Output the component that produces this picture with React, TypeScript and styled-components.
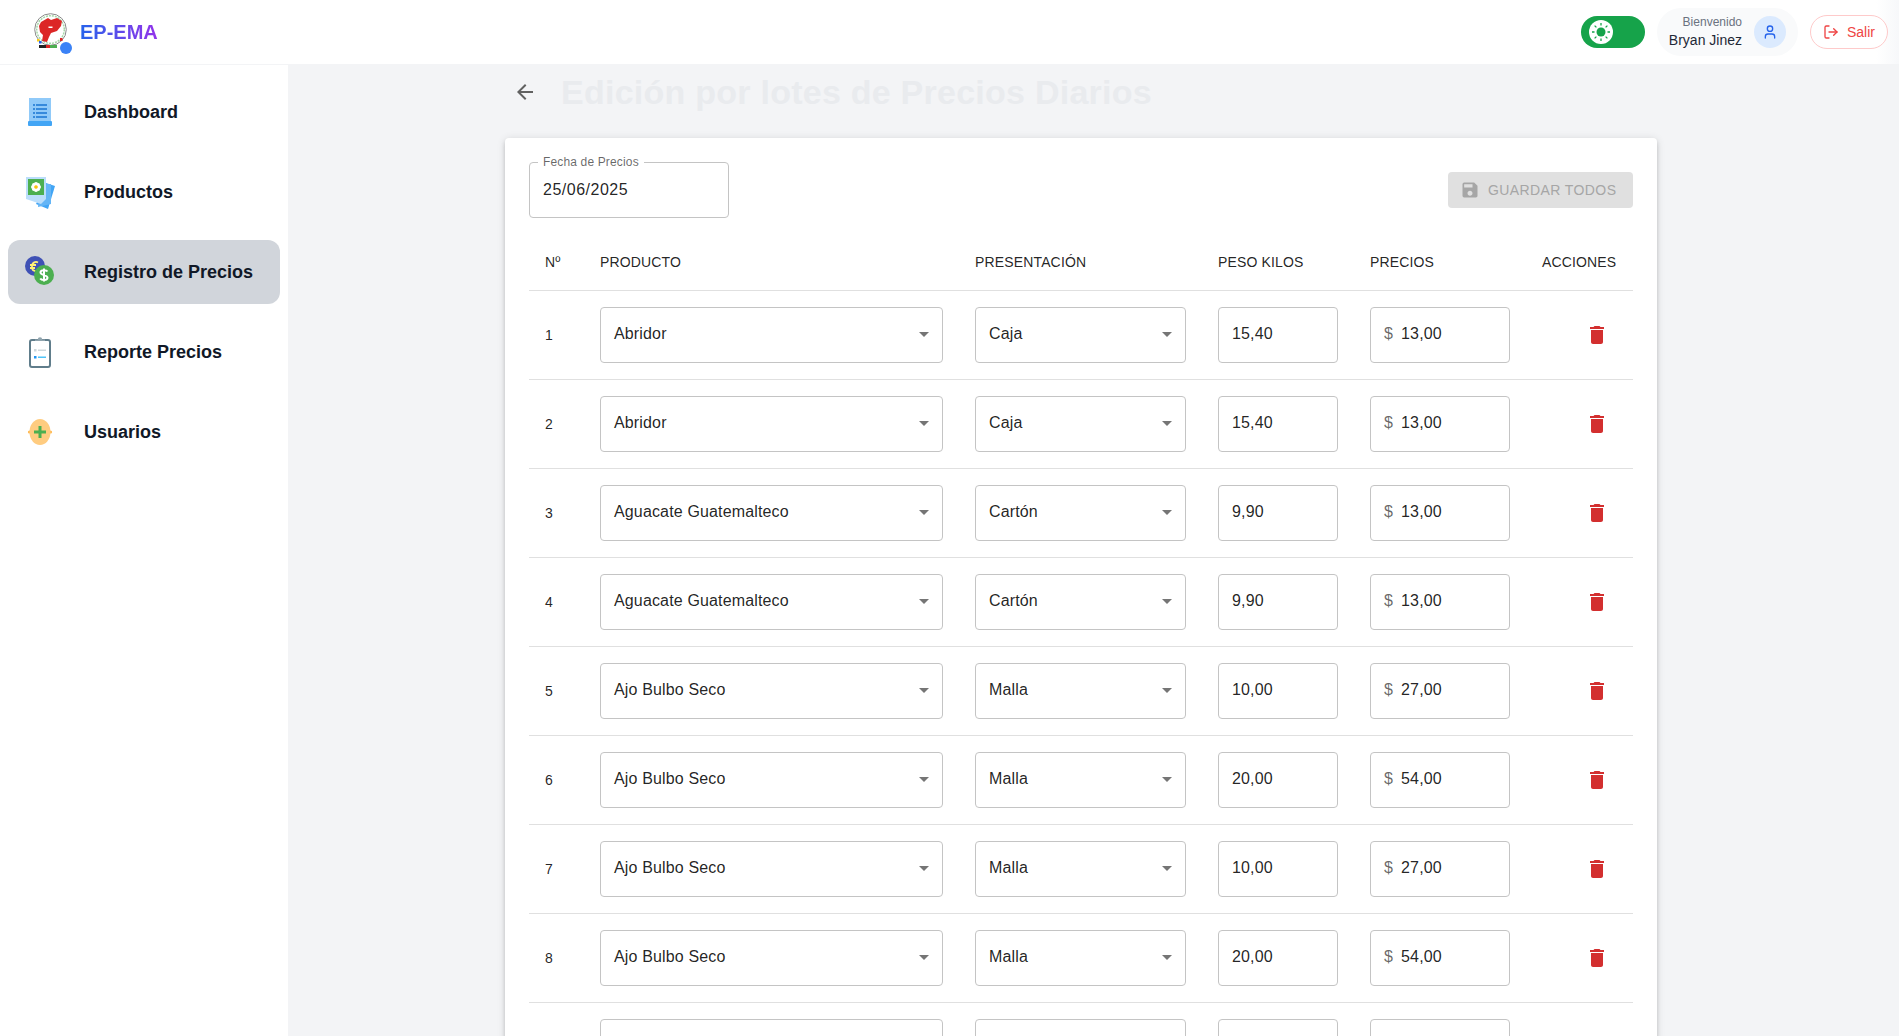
import React from "react";
import styled, { createGlobalStyle } from "styled-components";
import { LogOut, User } from "lucide-react";
import { MdArrowBack, MdArrowDropDown, MdDelete, MdSave } from "react-icons/md";

const Global = createGlobalStyle`
  html, body { margin: 0; padding: 0; height: 100%; }
  body { font-family: "Liberation Sans", Arial, sans-serif; background: #f3f4f6; color: #111827; }
  * { box-sizing: border-box; }
`;

const Shell = styled.div`height: 100vh; overflow: hidden; display: flex; flex-direction: column;`;
const TopBar = styled.header`
  flex: none; height: 65px; background: linear-gradient(90deg, #fff 0, #fff 98.8%, #f7f8fa 100%); border-bottom: 1px solid #f3f4f6;
  display: flex; align-items: center; justify-content: space-between; padding: 0 11px 0 34px;
`;
const Brand = styled.div`display: flex; align-items: center; gap: 13px;`;
const LogoWrap = styled.div`position: relative; width: 33px; height: 38px; display: flex;`;
const LogoDot = styled.span`
  position: absolute; right: -5px; bottom: -3px; width: 12px; height: 12px; border-radius: 50%; background: #3b82f6;
`;
const BrandName = styled.span`
  font-size: 20px; font-weight: 700; line-height: 28px;
  background: linear-gradient(90deg, #2563eb, #9333ea);
  -webkit-background-clip: text; background-clip: text; color: transparent;
`;
const TopRight = styled.div`display: flex; align-items: center;`;
const Toggle = styled.div`
  width: 64px; height: 32px; border-radius: 16px; background: #16a34a; display: flex; align-items: center;
  padding-left: 8px; margin-right: 12px;
`;
const Knob = styled.span`
  width: 24px; height: 24px; border-radius: 50%; background: #fff; color: #16a34a;
  display: flex; align-items: center; justify-content: center;
`;
const UserPill = styled.div`
  height: 48px; width: 141px; border-radius: 24px; background: #f9fafb; display: flex; align-items: center;
  justify-content: flex-end; padding-right: 12px; gap: 12px; margin-right: 12px;
`;
const UserText = styled.div`display: flex; flex-direction: column; align-items: flex-end;`;
const Hello = styled.span`font-size: 12px; line-height: 16px; color: #6b7280;`;
const UserName = styled.span`font-size: 14px; line-height: 20px; color: #1f2937;`;
const Avatar = styled.span`
  width: 32px; height: 32px; border-radius: 50%; background: #dbeafe; color: #2563eb;
  display: flex; align-items: center; justify-content: center;
`;
const Logout = styled.button`
  width: 78px; height: 34px; border-radius: 17px; background: #fff; border: 1px solid #fecaca; color: #ef4444;
  font: 400 14px "Liberation Sans", sans-serif; display: flex; align-items: center; justify-content: center; gap: 8px; padding: 0;
`;

const Body = styled.div`flex: 1; min-height: 0; display: flex;`;
const Side = styled.nav`
  flex: none; width: 288px; background: #fff; padding: 15px 8px 0; display: flex; flex-direction: column; gap: 16px;
`;
const NavItem = styled.div<{ $active?: boolean }>`
  height: 64px; border-radius: 12px; display: flex; align-items: center; gap: 26px; padding-left: 14px;
  background: ${(p) => (p.$active ? "#d1d5db" : "transparent")};
  font-size: 18px; font-weight: 700; color: #111827;
`;
const NavIcon = styled.svg`width: 36px; height: 36px; flex: none;`;

const Main = styled.main`flex: 1; min-width: 0; padding-right: 25px; overflow: hidden;`;
const Content = styled.div`max-width: 1152px; margin: 0 auto;`;
const TitleRow = styled.div`display: flex; align-items: center; height: 54px; margin-bottom: 19px;`;
const BackBtn = styled.span`
  width: 40px; height: 40px; display: flex; align-items: center; justify-content: center; color: #616161; margin-right: 16px;
`;
const Title = styled.h1`margin: 0; font-size: 34px; letter-spacing: .25px; line-height: 40px; font-weight: 700; color: #e9ebee;`;

const Card = styled.section`
  background: #fff; border-radius: 4px; padding: 24px;
  box-shadow: 0 3px 3px -2px rgba(0,0,0,.2), 0 3px 4px 0 rgba(0,0,0,.14), 0 1px 8px 0 rgba(0,0,0,.12);
`;
const Toolbar = styled.div`display: flex; align-items: center; justify-content: space-between; margin-bottom: 16px;`;
const Field = styled.div<{ $w: number }>`
  position: relative; width: ${(p) => p.$w}px; height: 56px; border: 1px solid #c4c4c4; border-radius: 4px;
  display: flex; align-items: center; padding: 0 6px 1px 13px; font-size: 16px; letter-spacing: .15px; color: rgba(0,0,0,.87);
`;
const FieldLabel = styled.label`
  position: absolute; left: 8px; top: -9px; padding: 0 5px; background: #fff; font-size: 12px; line-height: 16px; letter-spacing: .15px; color: rgba(0,0,0,.6);
`;
const DateText = styled.span`letter-spacing: .5px;`;
const SaveBtn = styled.button`
  width: 185px; height: 36px; border: 0; border-radius: 4px; background: #e0e0e0; color: #a6a6a6; padding: 0 0 0 12px;
  display: flex; align-items: center; gap: 8px; font: 500 14px "Liberation Sans", sans-serif; letter-spacing: .4px; text-transform: uppercase;
`;
const Table = styled.table`width: 1104px; border-collapse: collapse; table-layout: fixed;`;
const Th = styled.th<{ $w: number }>`
  width: ${(p) => p.$w}px; height: 56px; padding: 0 16px; text-align: left; font-size: 14px; font-weight: 400; letter-spacing: .15px; color: rgba(0,0,0,.87);
  border-bottom: 1px solid #e0e0e0;
`;
const Td = styled.td`
  height: 89px; padding: 16px; font-size: 14px; letter-spacing: .15px; color: rgba(0,0,0,.87); border-bottom: 1px solid #e0e0e0;
`;
const Grow = styled.span`flex: 1;`;
const Caret = styled.span`color: #757575; display: flex;`;
const Dollar = styled.span`color: rgba(0,0,0,.6); margin-right: 8px;`;
const DeleteBtn = styled.span`
  width: 40px; height: 40px; margin-left: auto; color: #d32f2f; display: flex; align-items: center; justify-content: center;
`;

const SunGlyph = () => (
  <svg width="20" height="20" viewBox="0 0 20 20">
    <circle cx="10" cy="10" r="4.500" fill="currentColor" />
    <path d="M10 1v2.500M10 16.500V19M1 10h2.500M16.500 10H19M3.600 3.600l1.800 1.800M14.600 14.600l1.800 1.800M3.600 16.400l1.800-1.800M14.600 5.400l1.800-1.800" stroke="currentColor" strokeWidth="1.300" />
  </svg>
);

const DashboardIcon = () => (
  <NavIcon viewBox="0 0 36 36">
    <rect x="7" y="4" width="22" height="26" fill="#90caf9" />
    <rect x="6" y="27" width="24" height="5" rx="1" fill="#42a5f5" />
    <path d="M11 11h14M11 15h14M11 19h14M11 23h14" stroke="#1976d2" strokeWidth="1.600" />
    <path d="M13.500 9.500v15" stroke="#90caf9" strokeWidth="1" />
  </NavIcon>
);
const ProductsIcon = () => (
  <NavIcon viewBox="0 0 36 36">
    <path d="M24 9l9 3-7 23-12-5z" fill="#42a5f5" />
    <path d="M18 10h11v20l-13 3z" fill="#64b5f6" />
    <path d="M4 3h20v22l-5 5L4 25z" fill="#bbdefb" />
    <rect x="6" y="5" width="16" height="16" fill="#4caf50" />
    <g fill="#fff">
      <circle cx="14" cy="10" r="2" /><circle cx="14" cy="16" r="2" />
      <circle cx="11" cy="13" r="2" /><circle cx="17" cy="13" r="2" />
      <circle cx="11.800" cy="10.800" r="1.800" /><circle cx="16.200" cy="10.800" r="1.800" />
      <circle cx="11.800" cy="15.200" r="1.800" /><circle cx="16.200" cy="15.200" r="1.800" />
    </g>
    <circle cx="14" cy="13" r="1.800" fill="#ffc107" />
  </NavIcon>
);
const PriceIcon = () => (
  <NavIcon viewBox="0 0 36 36">
    <circle cx="13" cy="12" r="10" fill="#3f51b5" />
    <path d="M16 8.500a4 4 0 0 0-6 3v3a4 4 0 0 0 6 2M8 11h6M8 14h5" stroke="#fff176" strokeWidth="1.800" fill="none" />
    <circle cx="22" cy="21" r="10" fill="#4caf50" />
    <path d="M25.500 17.500c-1-1.500-7-2-7 1s7 2.200 7 5.200-6 2.800-7.300.8M22 14.500v13" stroke="#fff" strokeWidth="2" fill="none" />
  </NavIcon>
);
const ReportIcon = () => (
  <NavIcon viewBox="0 0 36 36">
    <rect x="8" y="6" width="20" height="27" rx="2" fill="#fff" stroke="#607d8b" strokeWidth="2" />
    <path d="M13 7h10v-1.500h-2.800a2.200 2.200 0 0 0-4.400 0H13z" fill="#90a4ae" />
    <rect x="12" y="15" width="2.500" height="2.500" fill="#cfd8dc" />
    <rect x="16" y="15.500" width="8" height="1.500" fill="#cfd8dc" />
    <rect x="12" y="22" width="2.500" height="2.500" fill="#2196f3" />
    <rect x="16" y="22.500" width="8" height="1.500" fill="#4fc3f7" />
  </NavIcon>
);
const UsersIcon = () => (
  <NavIcon viewBox="0 0 36 36">
    <circle cx="7.500" cy="18" r="1.600" fill="#ffb74d" />
    <circle cx="28.500" cy="18" r="1.600" fill="#ffb74d" />
    <ellipse cx="18" cy="18" rx="10.500" ry="13" fill="#ffcc80" />
    <path d="M18 12v12M12 18h12" stroke="#4caf50" strokeWidth="3" />
  </NavIcon>
);

const EcuadorLogo = () => (
  <svg width="33" height="38" viewBox="0 0 33 38">
    <circle cx="16.500" cy="16.500" r="15.800" fill="#fff" stroke="#8a8a8a" strokeWidth="1" />
    <circle cx="16.500" cy="16.500" r="13.800" fill="none" stroke="#a5d6a7" strokeWidth="1.500" strokeDasharray="2 1" />
    <path d="M7 9l7-4 3 2 6-2 5 3-1 5-4 5-6 2-2 4-2 5-5-1 1-6-3-3-1-6 1-2z" fill="#dc2626" />
    <rect x="14.500" y="13.500" width="4" height="1.500" fill="#fff" />
    <rect x="3" y="26" width="2.500" height="2.500" fill="#facc15" />
    <rect x="5" y="28" width="2.500" height="2.500" fill="#2563eb" />
    <rect x="26" y="25" width="2.500" height="3" fill="#dc2626" />
    <rect x="5" y="32" width="7" height="3" fill="#222" />
    <rect x="12" y="32" width="4" height="3" fill="#dc2626" />
    <rect x="16" y="32" width="7" height="3" fill="#4caf50" />
  </svg>
);

const navItems = [
  { label: "Dashboard", icon: <DashboardIcon /> },
  { label: "Productos", icon: <ProductsIcon /> },
  { label: "Registro de Precios", icon: <PriceIcon />, active: true },
  { label: "Reporte Precios", icon: <ReportIcon /> },
  { label: "Usuarios", icon: <UsersIcon /> },
];

const rows = [
  ["1", "Abridor", "Caja", "15,40", "13,00"],
  ["2", "Abridor", "Caja", "15,40", "13,00"],
  ["3", "Aguacate Guatemalteco", "Cartón", "9,90", "13,00"],
  ["4", "Aguacate Guatemalteco", "Cartón", "9,90", "13,00"],
  ["5", "Ajo Bulbo Seco", "Malla", "10,00", "27,00"],
  ["6", "Ajo Bulbo Seco", "Malla", "20,00", "54,00"],
  ["7", "Ajo Bulbo Seco", "Malla", "10,00", "27,00"],
  ["8", "Ajo Bulbo Seco", "Malla", "20,00", "54,00"],
  ["", "", "", "", ""],
];

const SelectField = ({ w, value }: { w: number; value: string }) => (
  <Field $w={w}>
    <Grow>{value}</Grow>
    <Caret><MdArrowDropDown size={24} /></Caret>
  </Field>
);

export default function App() {
  return (
    <Shell>
      <Global />
      <TopBar>
        <Brand>
          <LogoWrap><EcuadorLogo /><LogoDot /></LogoWrap>
          <BrandName>EP-EMA</BrandName>
        </Brand>
        <TopRight>
          <Toggle><Knob><SunGlyph /></Knob></Toggle>
          <UserPill>
            <UserText>
              <Hello>Bienvenido</Hello>
              <UserName>Bryan Jinez</UserName>
            </UserText>
            <Avatar><User size={16} /></Avatar>
          </UserPill>
          <Logout><LogOut size={16} />Salir</Logout>
        </TopRight>
      </TopBar>
      <Body>
        <Side>
          {navItems.map((n) => (
            <NavItem key={n.label} $active={n.active}>{n.icon}{n.label}</NavItem>
          ))}
        </Side>
        <Main>
          <Content>
            <TitleRow>
              <BackBtn><MdArrowBack size={24} /></BackBtn>
              <Title>Edición por lotes de Precios Diarios</Title>
            </TitleRow>
            <Card>
              <Toolbar>
                <Field $w={200}>
                  <FieldLabel>Fecha de Precios</FieldLabel>
                  <DateText>25/06/2025</DateText>
                </Field>
                <SaveBtn><MdSave size={20} />Guardar todos</SaveBtn>
              </Toolbar>
              <Table>
                <thead>
                  <tr>
                    <Th $w={55}>Nº</Th>
                    <Th $w={375}>PRODUCTO</Th>
                    <Th $w={243}>PRESENTACIÓN</Th>
                    <Th $w={152}>PESO KILOS</Th>
                    <Th $w={172}>PRECIOS</Th>
                    <Th $w={107}>ACCIONES</Th>
                  </tr>
                </thead>
                <tbody>
                  {rows.map(([n, prod, pres, peso, price], i) => (
                    <tr key={i}>
                      <Td>{n}</Td>
                      <Td><SelectField w={343} value={prod} /></Td>
                      <Td><SelectField w={211} value={pres} /></Td>
                      <Td><Field $w={120}>{peso}</Field></Td>
                      <Td><Field $w={140}>{price && <Dollar>$</Dollar>}{price}</Field></Td>
                      <Td><DeleteBtn><MdDelete size={24} /></DeleteBtn></Td>
                    </tr>
                  ))}
                </tbody>
              </Table>
            </Card>
          </Content>
        </Main>
      </Body>
    </Shell>
  );
}
